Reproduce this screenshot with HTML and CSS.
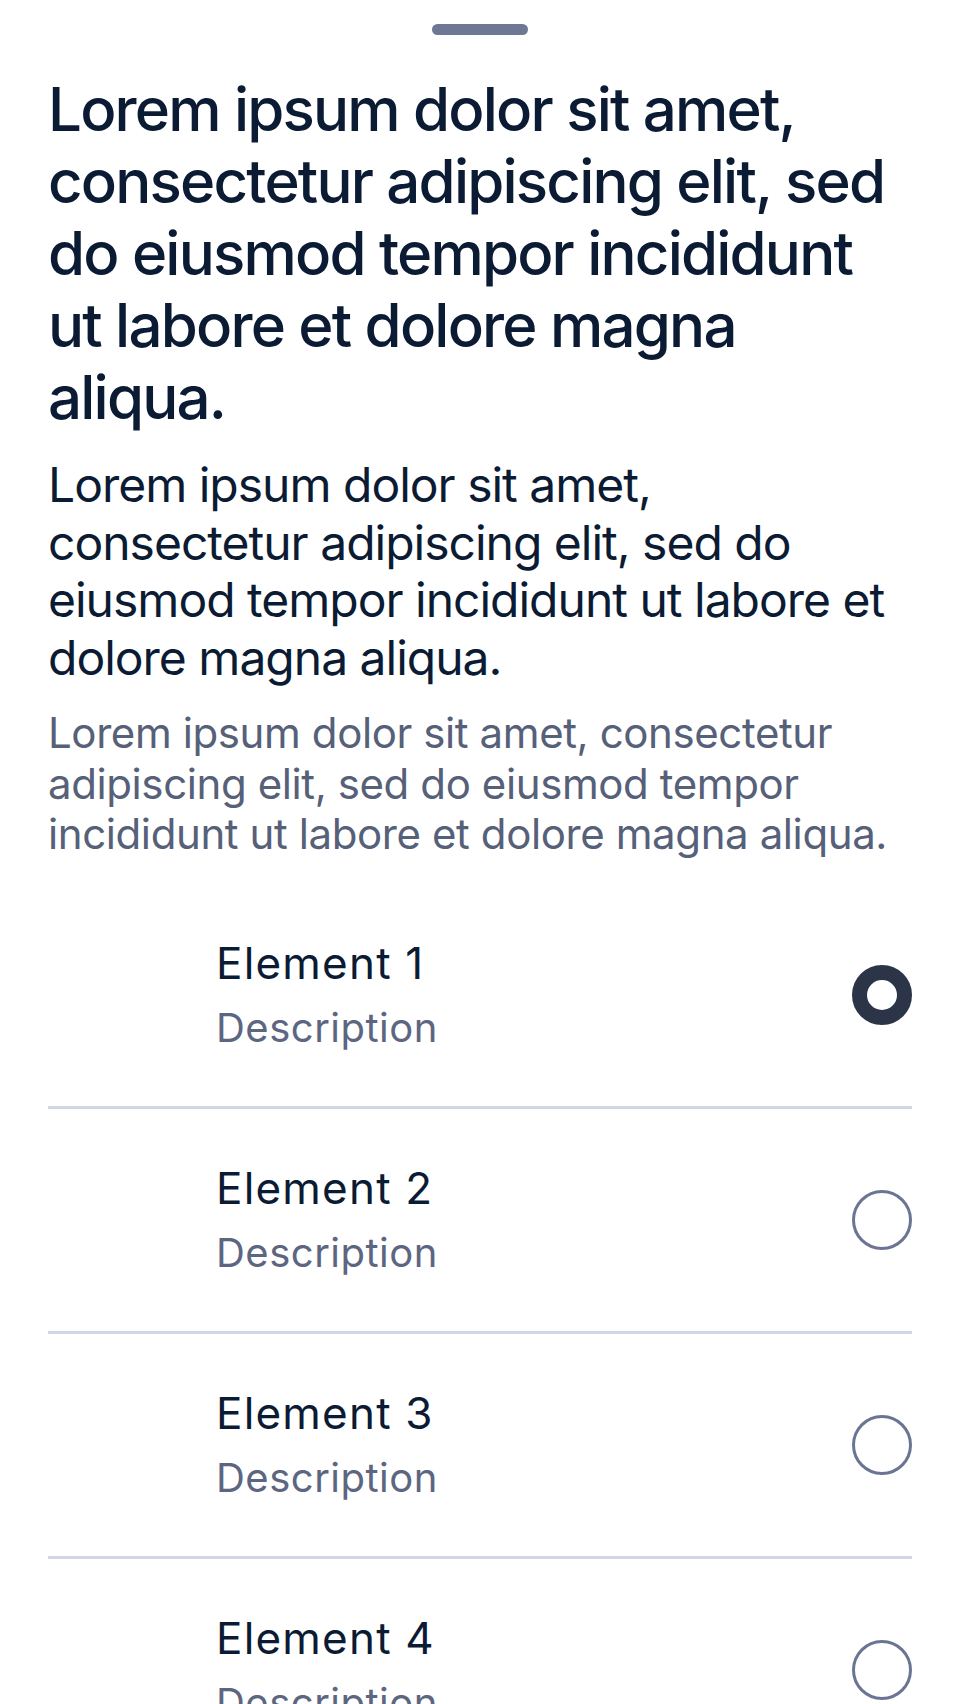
FILE: index.html
```html
<!DOCTYPE html>
<html lang="en">
<head>
<meta charset="utf-8">
<title>Sheet</title>
<link rel="stylesheet" href="styles.css">
</head>
<body>
<div class="sheet">
  <div class="handle-row"><div class="handle"></div></div>
  <h1 class="title">Lorem ipsum dolor sit amet, consectetur adipiscing elit, sed do eiusmod tempor incididunt ut labore et dolore magna aliqua.</h1>
  <p class="body">Lorem ipsum dolor sit amet, consectetur adipiscing elit, sed do eiusmod tempor incididunt ut labore et dolore magna aliqua.</p>
  <p class="caption">Lorem ipsum dolor sit amet, consectetur adipiscing elit, sed do eiusmod tempor incididunt ut labore et dolore magna aliqua.</p>
  <ul class="list">
    <li class="item">
      <div class="slot"></div>
      <div class="texts"><div class="name">Element 1</div><div class="desc">Description</div></div>
      <div class="radio radio-on"></div>
    </li>
    <li class="item">
      <div class="slot"></div>
      <div class="texts"><div class="name">Element 2</div><div class="desc">Description</div></div>
      <div class="radio"></div>
    </li>
    <li class="item">
      <div class="slot"></div>
      <div class="texts"><div class="name">Element 3</div><div class="desc">Description</div></div>
      <div class="radio"></div>
    </li>
    <li class="item">
      <div class="slot"></div>
      <div class="texts"><div class="name">Element 4</div><div class="desc">Description</div></div>
      <div class="radio"></div>
    </li>
  </ul>
</div>
</body>
</html>
```
FILE: styles.css
```css
* { box-sizing: border-box; }
html, body { margin: 0; padding: 0; background: #ffffff; }
body { font-family: Inter, "Noto Sans", sans-serif; color: #0b1b33; }
.sheet { width: 960px; height: 1704px; overflow: hidden; padding: 24px 48px 0; }
.handle-row { display: flex; justify-content: center; }
.handle { width: 96px; height: 11px; border-radius: 6px; background: #6e7793; }
.title { margin: 38px 0 0; font-size: 60px; line-height: 72px; font-weight: 500; letter-spacing: -1.8px; color: #0b1b33; }
.body { margin: 23px 0 0; font-size: 48px; line-height: 57.6px; font-weight: 400; letter-spacing: -1px; color: #0b1b33; }
.caption { margin: 22px 0 0; font-size: 42px; line-height: 50.4px; font-weight: 400; letter-spacing: -0.4px; color: #566079; }
.list { list-style: none; margin: 24px 0 0; padding: 0; }
.item { display: flex; align-items: center; gap: 24px; height: 225px; border-bottom: 3px solid #d1d6e4; }
.slot { width: 144px; flex: none; }
.texts { flex: 1; display: flex; flex-direction: column; gap: 14px; }
.name { font-size: 44px; line-height: 52.8px; letter-spacing: 1.2px; color: #0b1b33; }
.desc { font-size: 40px; line-height: 48px; letter-spacing: 0.5px; color: #5d6680; }
.radio { width: 60px; height: 60px; flex: none; border-radius: 50%; border: 3px solid #6b7493; }
.radio-on { border: 15px solid #2c3548; }
```
